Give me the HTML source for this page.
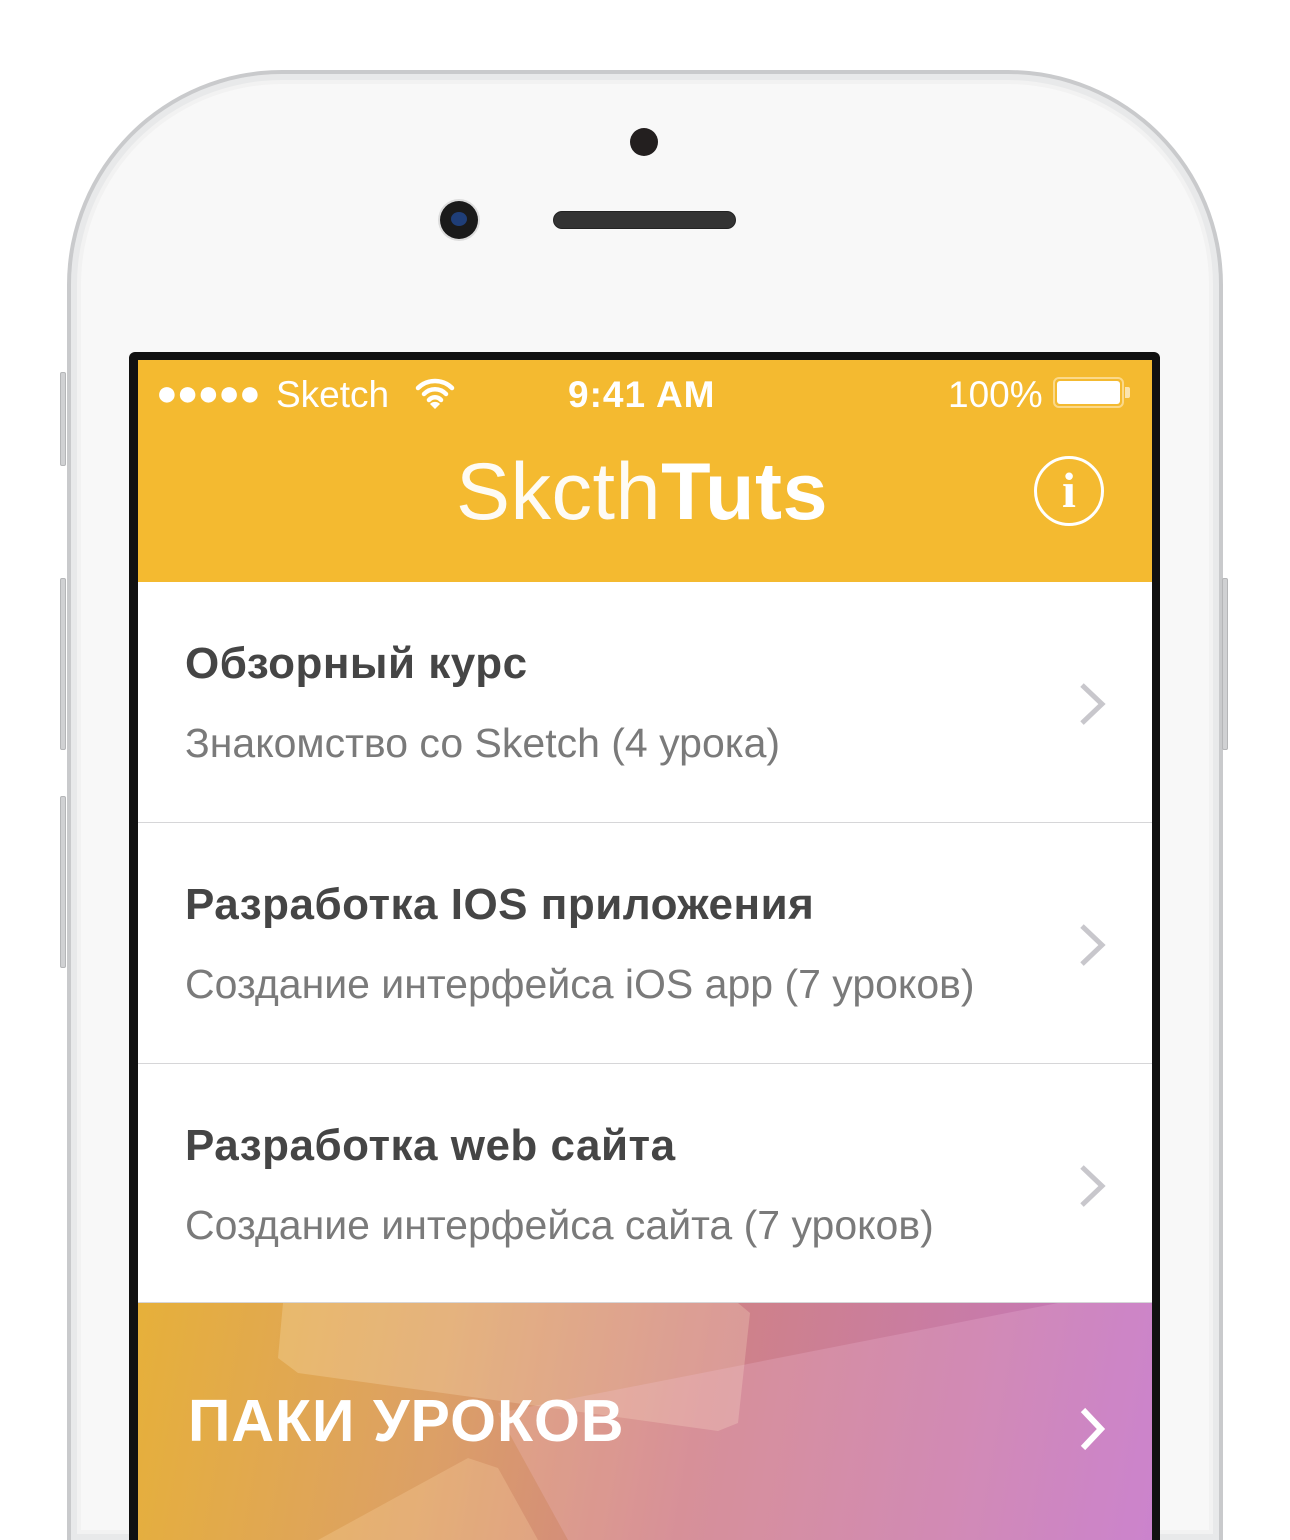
<!DOCTYPE html>
<html style="height:1540px;overflow:hidden"><head><meta charset="utf-8"><style>
*{margin:0;padding:0;box-sizing:border-box}
html,body{overflow:hidden}
body{width:1290px;height:1540px;background:#fff;position:relative;font-family:"Liberation Sans","DejaVu Sans",sans-serif}
.phone{position:absolute;left:67px;top:70px;width:1156px;height:1470px;border-radius:215px 215px 0 0;background:#f8f8f8;border:4px solid #c9cacc;border-bottom:none;box-shadow:inset 0 0 0 6px #e8e9ea,inset 0 0 0 10px #f2f2f2}
.btn{position:absolute;width:6px;background:#d0d1d3;border:1px solid #b5b6b8;border-radius:2px}
.screen{position:absolute;left:129px;top:352px;width:1031px;height:1188px;background:#111;border-radius:6px 6px 0 0}
.yel{position:absolute;left:138px;top:360px;width:1014px;height:222px;background:#f4ba30;color:#fff}
.row{position:absolute;left:138px;width:1014px;height:242px;background:#fff;border-bottom:2px solid #d6d6d8}
.t{position:absolute;left:47px;top:57px;font-size:44px;font-weight:bold;color:#454545;letter-spacing:0.5px}
.s{position:absolute;left:47px;top:138px;font-size:41px;color:#7a7a7a}
.ch{position:absolute;left:940px;top:100px}
.banner{position:absolute;left:138px;top:1303px;width:1014px;height:237px;background:linear-gradient(100deg,#e6b03a 0%,#dca066 30%,#cf8286 55%,#c87ba8 80%,#c072c6 100%);overflow:hidden}
</style></head><body>
<div class="phone"></div>
<div class="btn" style="left:60px;top:372px;height:94px"></div>
<div class="btn" style="left:60px;top:578px;height:172px"></div>
<div class="btn" style="left:60px;top:796px;height:172px"></div>
<div class="btn" style="left:1222px;top:578px;height:172px"></div>
<div style="position:absolute;left:630px;top:128px;width:28px;height:28px;border-radius:50%;background:#231f1f"></div>
<div style="position:absolute;left:553px;top:211px;width:183px;height:18px;border-radius:9px;background:#333;border:1px solid #222"></div>
<div style="position:absolute;left:440px;top:201px;width:38px;height:38px;border-radius:50%;background:#1a1a1a;box-shadow:0 0 0 2px #ddd"><div style="position:absolute;left:11px;top:11px;width:16px;height:14px;border-radius:50%;background:#1f3e78"></div></div>
<div class="screen"></div>
<div class="yel">
 <div style="position:absolute;left:18px;top:12px;font-size:36px;letter-spacing:-1px">●●●●●</div>
 <div style="position:absolute;left:138px;top:14px;font-size:37px">Sketch</div>
 <svg style="position:absolute;left:276px;top:16px" width="42" height="34" viewBox="0 0 42 34"><path d="M4 12a24 24 0 0 1 34 0M10 18a15 15 0 0 1 22 0M15 24a8 8 0 0 1 12 0" fill="none" stroke="#fff" stroke-width="4.5" stroke-linecap="round"/><path d="M16 28l5 5 5-5a7 7 0 0 0-10 0z" fill="#fff"/></svg>
 <div style="position:absolute;left:430px;top:14px;font-size:37px;font-weight:bold;letter-spacing:1px">9:41 AM</div>
 <div style="position:absolute;left:810px;top:14px;font-size:37px">100%</div>
 <div style="position:absolute;left:915px;top:17px;width:71px;height:31px;border:2px solid #fbd98a;border-radius:6px;padding:2px"><div style="width:100%;height:100%;background:#fff;border-radius:3px"></div></div>
 <div style="position:absolute;left:987px;top:27px;width:5px;height:11px;background:#fbe4ad;border-radius:0 2px 2px 0"></div>
 <div style="position:absolute;left:318px;top:82px;font-size:81px;line-height:100px;letter-spacing:0.5px;white-space:nowrap"><span style="font-weight:normal;opacity:.95">Skcth</span><span style="font-weight:bold">Tuts</span></div>
 <div style="position:absolute;left:896px;top:96px;width:70px;height:70px;border:3px solid #fff;border-radius:50%;text-align:center;font-family:'Liberation Serif',serif;font-size:50px;font-weight:bold;line-height:62px">i</div>
</div>
<div class="row" style="top:582px"><div class="t">Обзорный курс</div><div class="s">Знакомство со Sketch (4 урока)</div>
<svg class="ch" width="30" height="44" viewBox="0 0 30 44"><path d="M4 3l20 19-20 19" fill="none" stroke="#c8c7cc" stroke-width="5"/></svg></div>
<div class="row" style="top:823px"><div class="t">Разработка IOS приложения</div><div class="s">Создание интерфейса iOS app (7 уроков)</div>
<svg class="ch" width="30" height="44" viewBox="0 0 30 44"><path d="M4 3l20 19-20 19" fill="none" stroke="#c8c7cc" stroke-width="5"/></svg></div>
<div class="row" style="top:1064px;height:240px"><div class="t">Разработка web сайта</div><div class="s">Создание интерфейса сайта (7 уроков)</div>
<svg class="ch" width="30" height="44" viewBox="0 0 30 44"><path d="M4 3l20 19-20 19" fill="none" stroke="#c8c7cc" stroke-width="5"/></svg></div>
<div class="banner">
 <svg style="position:absolute;left:0;top:0" width="1014" height="237" viewBox="0 0 1014 237">
  <path d="M145 0H600L612 10 600 120 580 128 160 70 140 55z" fill="rgba(255,235,200,.25)"/>
  <path d="M360 110L920 0H1014V237H430z" fill="rgba(255,210,240,.18)"/>
  <path d="M180 237L330 155 360 165 400 237z" fill="rgba(255,220,170,.25)"/>
 </svg>
 <div style="position:absolute;left:50px;top:84px;font-size:59px;font-weight:bold;color:#fff;letter-spacing:1px">ПАКИ УРОКОВ</div>
 <svg style="position:absolute;left:940px;top:104px" width="30" height="44" viewBox="0 0 30 44"><path d="M5 3l18 19-18 19" fill="none" stroke="#fff" stroke-width="6"/></svg>
</div>
</body></html>
